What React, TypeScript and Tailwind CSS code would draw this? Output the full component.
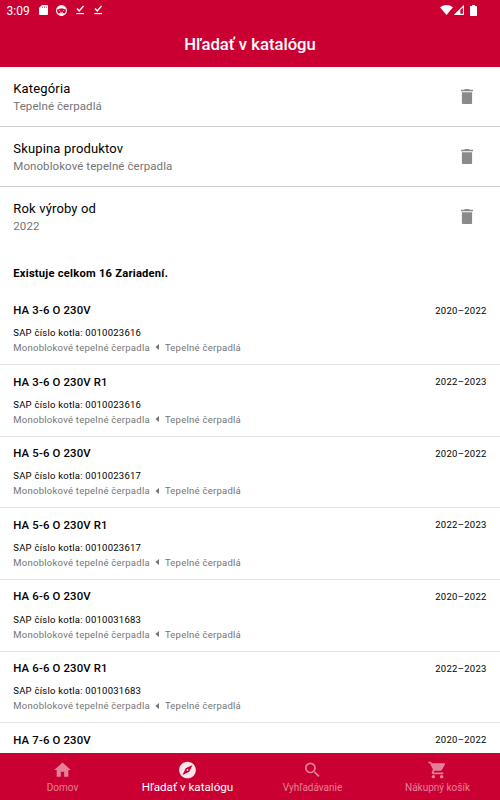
import type { ReactNode } from 'react';
import { MdExplore, MdHome, MdSearch, MdShoppingCart } from 'react-icons/md';

const filters = [
  { label: 'Kategória', value: 'Tepelné čerpadlá' },
  { label: 'Skupina produktov', value: 'Monoblokové tepelné čerpadla' },
  { label: 'Rok výroby od', value: '2022' },
];

const devices = [
  { name: 'HA 3-6 O 230V', sap: '0010023616', years: '2020–2022' },
  { name: 'HA 3-6 O 230V R1', sap: '0010023616', years: '2022–2023' },
  { name: 'HA 5-6 O 230V', sap: '0010023617', years: '2020–2022' },
  { name: 'HA 5-6 O 230V R1', sap: '0010023617', years: '2022–2023' },
  { name: 'HA 6-6 O 230V', sap: '0010031683', years: '2020–2022' },
  { name: 'HA 6-6 O 230V R1', sap: '0010031683', years: '2022–2023' },
  { name: 'HA 7-6 O 230V', years: '2020–2022' },
];

function StatusBar() {
  return (
    <div className="flex h-5 items-center justify-between pl-[6.500px] pr-[23px] text-white">
      <div className="flex items-center">
        <span className="w-[32.500px] pt-px text-[12px] leading-5">3:09</span>
        <svg className="h-[10px] w-[9px]" viewBox="0 0 9 10" fill="currentColor">
          <path d="M3 0h5.2q.8 0 .8.8v8.4q0 .8-.8.8H.8Q0 10 0 9.200V3z" />
          <path d="M3.500 1.500v1.500M5.500 1.500v1.500M7.300 1.500v1.500" stroke="#cb0032" strokeWidth=".6" />
        </svg>
        <svg className="ml-[8px] h-[11px] w-[11px]" viewBox="0 0 11 11">
          <circle cx="5.500" cy="5.500" r="4.900" fill="#cb0032" stroke="#fff" strokeWidth="1.100" />
          <path d="M.8 3.800Q5.500-2.500 10.200 3.800L8.800 4.300 7 3.500H4L2.200 4.300z" fill="#fff" />
          <path d="M2.500 8.300h6L7 10.200H4z" fill="#fff" />
          <path d="M2.800 5l1.500 1.200M8.200 5l-1.500 1.200M4 7.400h3" stroke="#fff" strokeWidth=".6" />
        </svg>
        <DownloadDone className="ml-[9px]" />
        <DownloadDone className="ml-[9.500px]" />
      </div>
      <div className="flex items-center">
        <svg className="h-[10px] w-[13px]" viewBox="0 0 13 10" fill="currentColor">
          <path d="M0 2.200Q6.500-2.200 13 2.200L6.500 10z" />
        </svg>
        <svg className="ml-[1px] h-[10px] w-[10px]" viewBox="0 0 10 10">
          <path d="M9.400 1.200v8.200H1.200z" fill="none" stroke="#fff" strokeWidth="1.100" />
          <path d="M6.300 4.200v5.300H1z" fill="#fff" />
        </svg>
        <svg className="ml-[6px] h-[11px] w-[7px]" viewBox="0 0 7 11" fill="currentColor">
          <path d="M2 0h3v1h1.300q.7 0 .7.7v8.600q0 .7-.7.7H.7Q0 11 0 10.300V1.700Q0 1 .7 1H2z" />
        </svg>
      </div>
    </div>
  );
}

function DownloadDone({ className }: { className: string }) {
  return (
    <svg className={`h-[10px] w-[8.500px] ${className}`} viewBox="0 0 9 10" fill="none" stroke="#fff">
      <path d="M1 3.500l2.400 2.400L8 .8" strokeWidth="1.500" />
      <path d="M.3 8.800h8.200" strokeWidth="1.200" />
    </svg>
  );
}

function TrashIcon() {
  return (
    <svg className="h-[15px] w-[12px]" viewBox="0 0 12 15" fill="#8a8a8a">
      <path d="M3.600 0h4.800v.8H12v1.500H0V.8h3.600z" />
      <path d="M.9 3.200h10.200v10.800q0 1-1 1H1.900q-1 0-1-1z" />
    </svg>
  );
}

function NavItem({ icon, label, active = false }: { icon: ReactNode; label: string; active?: boolean }) {
  return (
    <button className={`flex flex-1 flex-col items-center pt-[6.600px] ${active ? 'text-white' : 'text-white/50'}`}>
      <span className={`-translate-x-[0.500px] text-[20px] ${active ? 'opacity-90' : ''}`}>{icon}</span>
      <span
        className={
          active
            ? '-mt-[0.500px] text-[11.670px] leading-[14px]'
            : 'mt-[2px] text-[10px] leading-[12px]'
        }
      >
        {label}
      </span>
    </button>
  );
}

export default function App() {
  return (
    <div className="flex h-screen flex-col overflow-hidden bg-white font-[Roboto,sans-serif] text-black">
      <header className="h-[66.600px] shrink-0 bg-[#cb0032]">
        <StatusBar />
        <h1 className="pt-px text-center text-[16.670px] font-medium leading-[47px] text-white">Hľadať v katalógu</h1>
      </header>

      <main className="min-h-0 flex-1 overflow-hidden">
        {filters.map(({ label, value }, i) => (
          <div
            key={label}
            className={`flex h-[60px] items-center justify-between pl-[13.300px] pr-[27px] ${
              i < filters.length - 1 ? 'border-b border-[#cfcfcf]' : ''
            }`}
          >
            <div className="pt-[1.500px]">
              <div className="text-[13px] leading-[18px] tracking-[0.160px]">{label}</div>
              <div className="text-[11.500px] leading-[16px] tracking-[0.080px] text-[#747474]">{value}</div>
            </div>
            <TrashIcon />
          </div>
        ))}

        <p className="flex h-[46.800px] items-center pl-[13.300px] pt-[8px] text-[11.200px] font-bold leading-[16px] tracking-[0.220px]">
          Existuje celkom 16 Zariadení.
        </p>

        {devices.map(({ name, sap, years }) => (
          <div
            key={name}
            className={`border-[#e3e3e3] px-[13.300px] pt-[9px] ${sap ? 'h-[71.670px] border-b' : ''}`}
          >
            <div className="flex h-4 items-center justify-between">
              <span className="text-[11.400px] font-medium tracking-[0.140px]">{name}</span>
              <span className="pt-[0.500px] text-[9.500px] tracking-[0.280px]">{years}</span>
            </div>
            {sap && (
              <>
                <div className="mt-[6.600px] text-[9.500px] leading-[15px] tracking-[0.240px]">SAP číslo kotla: {sap}</div>
                <div className="flex items-center text-[9.500px] leading-[15px] tracking-[0.250px] text-[#747474]">
                  <span>Monoblokové tepelné čerpadla</span>
                  <svg className="ml-[5px] mr-[6px] h-[6px] w-[4px]" viewBox="0 0 4 6" fill="currentColor">
                    <path d="M4 0v6L.5 3z" />
                  </svg>
                  <span>Tepelné čerpadlá</span>
                </div>
              </>
            )}
          </div>
        ))}
      </main>

      <nav className="flex h-[46.600px] shrink-0 bg-[#cb0032]">
        <NavItem icon={<MdHome />} label="Domov" />
        <NavItem icon={<MdExplore />} label="Hľadať v katalógu" active />
        <NavItem icon={<MdSearch />} label="Vyhľadávanie" />
        <NavItem icon={<MdShoppingCart />} label="Nákupný košík" />
      </nav>
    </div>
  );
}
